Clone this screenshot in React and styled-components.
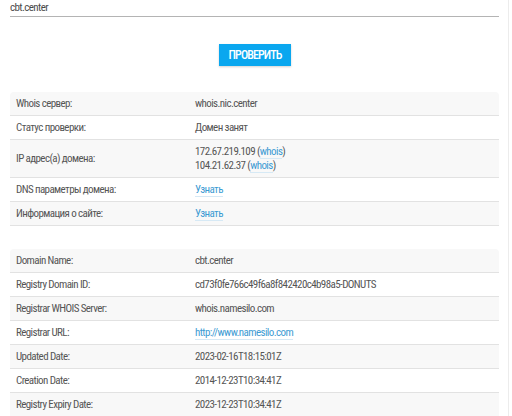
import React from "react";
import styled, { createGlobalStyle } from "styled-components";

const GlobalStyle = createGlobalStyle`
  html, body {
    margin: 0;
    padding: 0;
    background: #fff;
  }
  body {
    font-family: "Roboto Condensed", Roboto, "Liberation Sans", sans-serif;
    color: #555;
    font-size: 11px;
    letter-spacing: -0.6px;
  }
`;

const Page = styled.div`
  width: 509px;
  height: 416px;
  box-sizing: border-box;
  border-right: 1px solid #ececec;
  padding: 0 9px 0 10px;
  overflow: hidden;
`;

const Field = styled.div`
  height: 16px;
  border-bottom: 1.5px solid #b4b4b4;
  line-height: 16px;
  color: #4a4a4a;
`;

const ButtonRow = styled.div`
  display: flex;
  justify-content: center;
  padding: 27px 0 26px;
`;

const Button = styled.button`
  width: 72px;
  height: 22px;
  border: none;
  background: #0aa7ef;
  color: #fff;
  font-family: inherit;
  font-size: 12px;
  font-weight: 500;
  letter-spacing: -0.9px;
  text-transform: uppercase;
  box-shadow: 0 1px 2px rgba(0, 0, 0, 0.18);
  padding: 0;
  margin-left: 1px;
`;

const Table = styled.div`
  display: flex;
  flex-direction: column;
  margin-bottom: ${p => p.gap || 0}px;
`;

const Row = styled.div`
  display: grid;
  grid-template-columns: 185px 1fr;
  align-items: center;
  min-height: 23px;
  border-bottom: 1px solid #e2e2e2;
  background: ${p => (p.shade ? "#f8f8f8" : "#fff")};
  border-radius: ${p => (p.first ? "4px 4px 0 0" : "0")};
`;

const Label = styled.div`
  padding-left: 6px;
  line-height: 14px;
`;

const Value = styled.div`
  padding: ${p => (p.multi ? "5px 0 4px" : "0")};
  line-height: 14px;
`;

const Link = styled.a`
  color: #3d9bd3;
  text-decoration: none;
  border-bottom: 1px solid #d6e9f5;
`;

const general = [
  { label: "Whois сервер:", value: "whois.nic.center" },
  { label: "Статус проверки:", value: "Домен занят" },
  {
    label: "IP адрес(а) домена:",
    multi: true,
    value: (
      <>
        172.67.219.109 (<Link href="#">whois</Link>)
        <br />
        104.21.62.37 (<Link href="#">whois</Link>)
      </>
    ),
  },
  { label: "DNS параметры домена:", value: <Link href="#">Узнать</Link> },
  { label: "Информация о сайте:", value: <Link href="#">Узнать</Link> },
];

const whois = [
  { label: "Domain Name:", value: "cbt.center" },
  { label: "Registry Domain ID:", value: "cd73f0fe766c49f6a8f842420c4b98a5-DONUTS" },
  { label: "Registrar WHOIS Server:", value: "whois.namesilo.com" },
  { label: "Registrar URL:", value: <Link href="#">http://www.namesilo.com</Link> },
  { label: "Updated Date:", value: "2023-02-16T18:15:01Z" },
  { label: "Creation Date:", value: "2014-12-23T10:34:41Z" },
  { label: "Registry Expiry Date:", value: "2023-12-23T10:34:41Z" },
];

function InfoTable({ rows, gap }) {
  return (
    <Table gap={gap}>
      {rows.map((r, i) => (
        <Row key={r.label} shade={i % 2 === 0} first={i === 0}>
          <Label>{r.label}</Label>
          <Value multi={r.multi}>{r.value}</Value>
        </Row>
      ))}
    </Table>
  );
}

export default function App() {
  return (
    <>
      <GlobalStyle />
      <Page>
        <Field>cbt.center</Field>
        <ButtonRow>
          <Button>Проверить</Button>
        </ButtonRow>
        <InfoTable rows={general} gap={23} />
        <InfoTable rows={whois} />
      </Page>
    </>
  );
}
